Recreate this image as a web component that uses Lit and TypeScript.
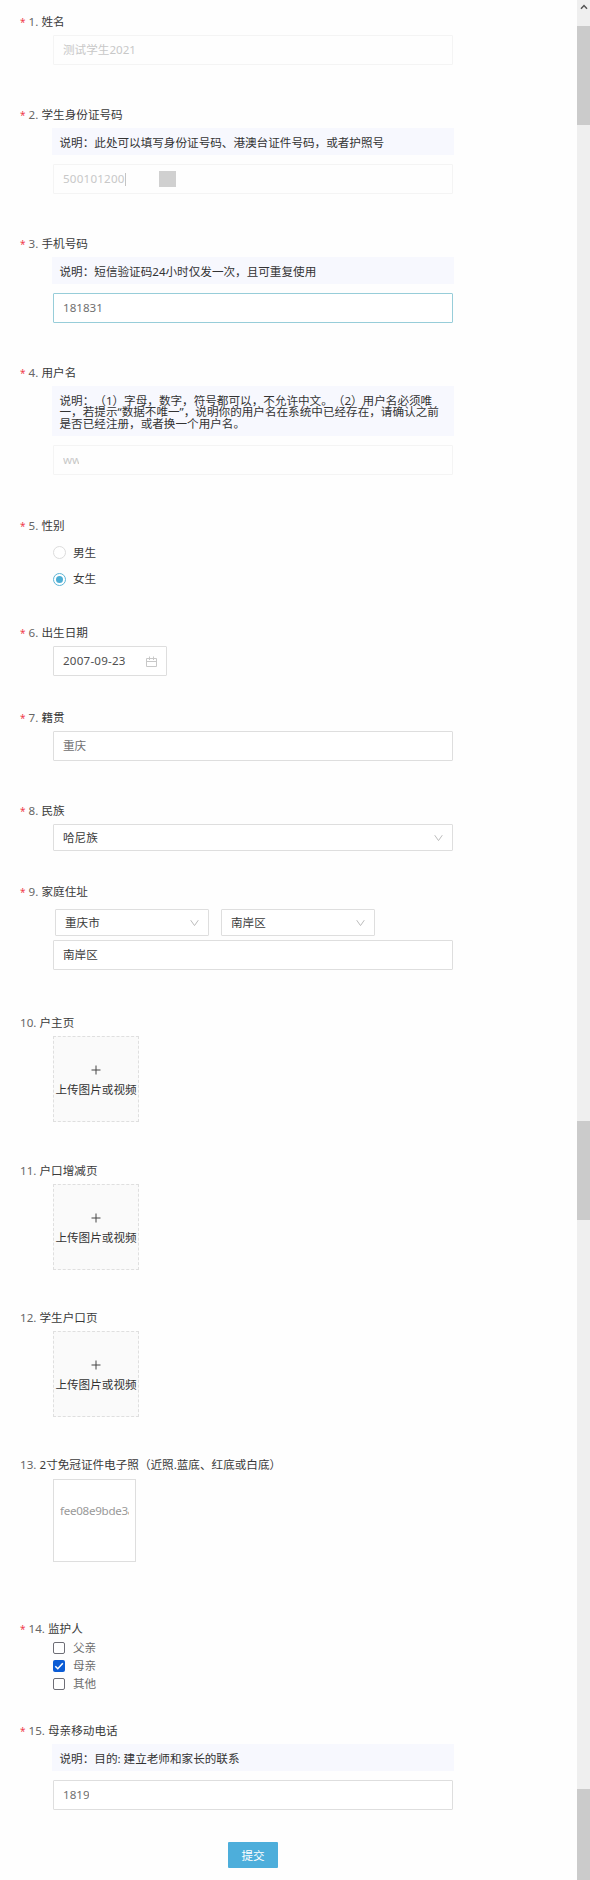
import { LitElement, html, css, svg, nothing } from "lit";
import { customElement } from "lit/decorators.js";
import { classMap } from "lit/directives/class-map.js";

const chevron = svg`<svg class="chev" width="9" height="8" viewBox="0 0 9 8"><path d="M0.7 1.2 L4.5 6.6 L8.3 1.2" fill="none" stroke="#bcbcbc" stroke-width="1"/></svg>`;
const calendar = svg`<svg class="cal" width="11" height="11" viewBox="0 0 11 11" fill="none" stroke="#c8c8c8"><path d="M0.5 2.5 H10.5 V10.5 H0.5 Z M0.5 5.5 H10.5 M3.5 0.5 V4 M7.5 0.5 V4"/></svg>`;
const plus = svg`<svg class="plus" width="10" height="10" viewBox="0 0 10 10"><path d="M5 0.5 V9.5 M0.5 5 H9.5" stroke="#444" stroke-width="1" fill="none"/></svg>`;

@customElement("app-root")
export class AppRoot extends LitElement {
  static styles = css`
    :host {
      display: flex;
      width: 590px;
      height: 1880px;
      overflow: hidden;
      background: #fefefe;
      color: #3c3c3c;
      font: 11.6px/18px "Noto Sans", "Noto Sans CJK SC", sans-serif;
      text-spacing-trim: space-all;
      white-space: nowrap;
    }
    * { box-sizing: border-box; }
    svg { display: block; flex: none; }
    main {
      width: 577px;
      padding-top: 13px;
      display: grid;
      align-content: start;
      grid-template-rows: 93px 129px 129px 153px 107px 85px 93px 81px 131px 148px 147px 147px 164px 102px 120px 26px;
    }
    .label { display: flex; height: 18px; padding-left: 20px; color: #3a3a3a; }
    .star { width: 8.5px; color: #f0404c; font-size: 10px; }
    .num { width: 13px; color: #666; }
    .wide .num { width: 19.5px; }
    .body { padding: 5px 0 0 53px; }
    .raised { padding-top: 4px; }
    .note {
      width: 402px;
      margin: -1px 0 9px -1px;
      padding: 9px 0 7px 7.5px;
      background: #f7f8fe;
      line-height: 11.4px;
      color: #333;
    }
    .field {
      display: flex;
      align-items: center;
      width: 400px;
      height: 30px;
      padding: 0 9px;
      border: 1px solid #dedede;
      border-radius: 1px;
      background: #fff;
      color: #707070;
    }
    .disabled { border-color: #f4f4f4; color: #c8c8c8; background: #fefefe; }
    .active { border-color: #97cdd9; }
    .dark { color: #3a3a3a; }
    .digits { letter-spacing: 0.22px; }
    .cut { overflow: hidden; }
    .phone { width: 39px; }
    .user { width: 16px; }
    .mobile { width: 26px; }
    .caret { width: 1px; height: 13px; background: #c4c4c4; }
    .mask { width: 17px; height: 16px; margin-left: 33px; background: #d0d0d0; }
    .select { height: 27px; justify-content: space-between; color: #3a3a3a; }
    .pair { display: flex; gap: 12px; padding: 3px 0 4px 2px; }
    .pair .select { width: 154px; }
    .date { width: 114px; justify-content: space-between; color: #505050; }
    .option { display: flex; align-items: center; gap: 7px; height: 26.5px; }
    .radios { padding-top: 4.5px; }
    .radio {
      width: 13px;
      height: 13px;
      border: 1px solid #dcdcdc;
      border-radius: 50%;
      background: #fff;
      display: grid;
      place-items: center;
    }
    .radio.on { border-color: #5eb5d6; }
    .radio.on::after { content: ""; width: 7px; height: 7px; border-radius: 50%; background: #4daed4; }
    .checks { padding-top: 1px; }
    .checks .option { height: 18.2px; gap: 8px; color: #6c6c6c; }
    .check { width: 12px; height: 12px; border: 1px solid #6e6e76; border-radius: 2px; background: #fff; }
    .check.on { border: 0; background: #0b5cd5; }
    .upload {
      width: 86px;
      height: 86px;
      border: 1px dashed #dfdfdf;
      background: #fafafa;
      display: flex;
      flex-direction: column;
      align-items: center;
      padding-top: 28px;
      gap: 6px;
      color: #333;
    }
    .photo {
      width: 83px;
      height: 83px;
      border: 1px solid #dedede;
      background: #fff;
      padding: 22px 6px 0;
      color: #999;
      letter-spacing: -0.28px;
    }
    .submit {
      margin-left: 228px;
      width: 50px;
      height: 26px;
      background: #4daedb;
      color: #fff;
      text-align: center;
      line-height: 27px;
      border-radius: 1px;
    }
    .bar {
      width: 13px;
      background: #efefef;
      display: grid;
      grid-template-rows: 26px 99px 996px 99px 569px 91px;
    }
    .arrow { margin: 4px 0 0 3px; }
    .thumb { background: #cbcbcb; }
  `;

  private item(num: number, title: string, body: unknown, required = true) {
    return html`<section>
      <div class=${classMap({ label: true, wide: num > 9 })}>
        ${required ? html`<span class="star">*</span>` : nothing}
        <span class="num">${num}.</span><span>${title}</span>
      </div>
      ${body}
    </section>`;
  }

  private upload(num: number, title: string) {
    return this.item(num, title, html`<div class="body raised"><div class="upload">${plus}<span>上传图片或视频</span></div></div>`, false);
  }

  private radio(text: string, on: boolean) {
    return html`<div class="option"><span class=${classMap({ radio: true, on })}></span><span>${text}</span></div>`;
  }

  private check(text: string, on: boolean) {
    return html`<div class="option">
      <span class=${classMap({ check: true, on })}>${on
        ? svg`<svg width="12" height="12" viewBox="0 0 12 12"><path d="M2.3 6.2 L4.8 8.7 L9.8 3.3" fill="none" stroke="#fff" stroke-width="1.6"/></svg>`
        : nothing}</span><span>${text}</span>
    </div>`;
  }

  render() {
    return html`
      <main>
        ${this.item(1, "姓名", html`<div class="body raised"><div class="field disabled">测试学生2021</div></div>`)}
        ${this.item(2, "学生身份证号码", html`<div class="body">
          <div class="note">说明：此处可以填写身份证号码、港澳台证件号码，或者护照号</div>
          <div class="field disabled"><span class="digits">500101200</span><span class="caret"></span><span class="mask"></span></div>
        </div>`)}
        ${this.item(3, "手机号码", html`<div class="body">
          <div class="note">说明：短信验证码24小时仅发一次，且可重复使用</div>
          <div class="field active"><span class="cut phone">181831</span></div>
        </div>`)}
        ${this.item(4, "用户名", html`<div class="body">
          <div class="note">说明：（1）字母，数字，符号都可以，不允许中文。（2）用户名必须唯<br>一，若提示“数据不唯一”，说明你的用户名在系统中已经存在，请确认之前<br>是否已经注册，或者换一个用户名。</div>
          <div class="field disabled"><span class="cut user">ww</span></div>
        </div>`)}
        ${this.item(5, "性别", html`<div class="body radios">${this.radio("男生", false)}${this.radio("女生", true)}</div>`)}
        ${this.item(6, "出生日期", html`<div class="body raised"><div class="field date"><span class="digits">2007-09-23</span>${calendar}</div></div>`)}
        ${this.item(7, "籍贯", html`<div class="body raised"><div class="field">重庆</div></div>`)}
        ${this.item(8, "民族", html`<div class="body raised"><div class="field select"><span>哈尼族</span>${chevron}</div></div>`)}
        ${this.item(9, "家庭住址", html`<div class="body">
          <div class="pair">
            <div class="field select"><span>重庆市</span>${chevron}</div>
            <div class="field select"><span>南岸区</span>${chevron}</div>
          </div>
          <div class="field dark">南岸区</div>
        </div>`)}
        ${this.upload(10, "户主页")}
        ${this.upload(11, "户口增减页")}
        ${this.upload(12, "学生户口页")}
        ${this.item(13, "2寸免冠证件电子照（近照.蓝底、红底或白底）", html`<div class="body"><div class="photo"><div class="cut">fee08e9bde3a</div></div></div>`, false)}
        ${this.item(14, "监护人", html`<div class="body checks">${this.check("父亲", false)}${this.check("母亲", true)}${this.check("其他", false)}</div>`)}
        ${this.item(15, "母亲移动电话", html`<div class="body">
          <div class="note">说明：目的: 建立老师和家长的联系</div>
          <div class="field"><span class="cut mobile">1819</span></div>
        </div>`)}
        <div class="submit">提交</div>
      </main>
      <div class="bar">
        <svg class="arrow" width="8" height="6" viewBox="0 0 8 6"><path d="M1 4.8 L4 1.5 L7 4.8" fill="none" stroke="#555" stroke-width="1.5"/></svg>
        <div class="thumb"></div><div></div><div class="thumb"></div><div></div><div class="thumb"></div>
      </div>
    `;
  }
}
